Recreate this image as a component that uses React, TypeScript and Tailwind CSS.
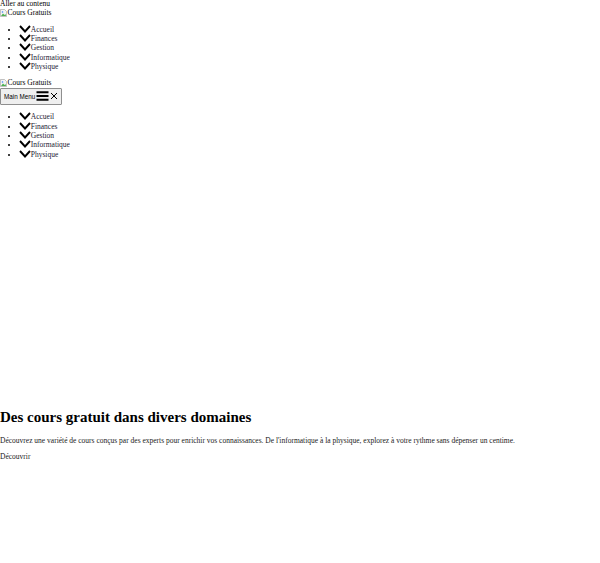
import { useState } from "react";

const links = ["Accueil", "Finances", "Gestion", "Informatique", "Physique"];

function BrokenImage({ alt }: { alt: string }) {
    return (
        <div className="flex items-center h-[8.6px] leading-[8.6px]">
            <svg width="7" height="8" viewBox="0 0 14 16" className="mr-[0.5px] shrink-0">
                <path d="M1 1h8l4 4v10H1z" fill="#f4f4f4" stroke="#9a9a9a" strokeWidth="1.2" />
                <path d="M2 14l4-5 3 3 2-2 1 4z" fill="#4caf50" />
                <circle cx="5" cy="6" r="1.6" fill="#3b82f6" />
            </svg>
            <span>{alt}</span>
        </div>
    );
}

function Chevron() {
    return (
        <svg width="12" height="8" viewBox="0 0 24 16" className="inline-block align-[-1px]">
            <path d="M2 2 L12 13 L22 2" fill="none" stroke="#000" strokeWidth="3.8" />
        </svg>
    );
}

function NavList() {
    return (
        <ul className="list-disc pl-[18.75px] my-[7.5px]">
            {links.map((label) => (
                <li key={label} className="h-[9.4px] leading-[9.4px]">
                    <a href="#" className="text-[#1c2033]">
                        <Chevron />
                        {label}
                    </a>
                </li>
            ))}
        </ul>
    );
}

export default function App(): JSX.Element {
    const [open, setOpen] = useState(false);

    return (
        <div className="w-[600px] h-[563px] bg-white text-black font-['Liberation_Serif',serif] text-[7.5px] leading-[8.6px]">
            <a href="#content" className="block h-[8.6px] text-black">Aller au contenu</a>

            {/* Header */}
            <BrokenImage alt="Cours Gratuits" />
            <NavList />

            {/* Mobile header */}
            <BrokenImage alt="Cours Gratuits" />
            <button
                className="flex items-center h-[17px] px-[3px] border border-[#8f8f8f] bg-[#efefef] rounded-[1px] font-['Liberation_Sans',sans-serif] text-[6.3px] text-black"
                onClick={() => setOpen(!open)}
            >
                <span className="mt-[3px]">Main Menu</span>
                <svg width="13" height="10" viewBox="0 0 26 20" className="ml-[1px]">
                    <path d="M1 2.5h24M1 10h24M1 17.5h24" stroke="#000" strokeWidth="3.8" />
                </svg>
                <svg width="8" height="8" viewBox="0 0 16 16" className="ml-[1px]">
                    <path d="M2 2l12 12M14 2L2 14" stroke="#000" strokeWidth="2" />
                </svg>
            </button>
            <NavList />

            {/* Hero */}
            <div id="content" className="pt-[242px]">
                <h1 className="font-bold text-[15px] leading-[17px] my-0">Des cours gratuit dans divers domaines</h1>
                <p className="mt-[11.5px] mb-[7.5px] text-[#222]">
                    Découvrez une variété de cours conçus par des experts pour enrichir vos connaissances. De l'informatique à la physique, explorez à votre rythme sans dépenser un centime.
                </p>
                <a href="#" className="block text-[#222]">Découvrir</a>
            </div>
        </div>
    );
}
